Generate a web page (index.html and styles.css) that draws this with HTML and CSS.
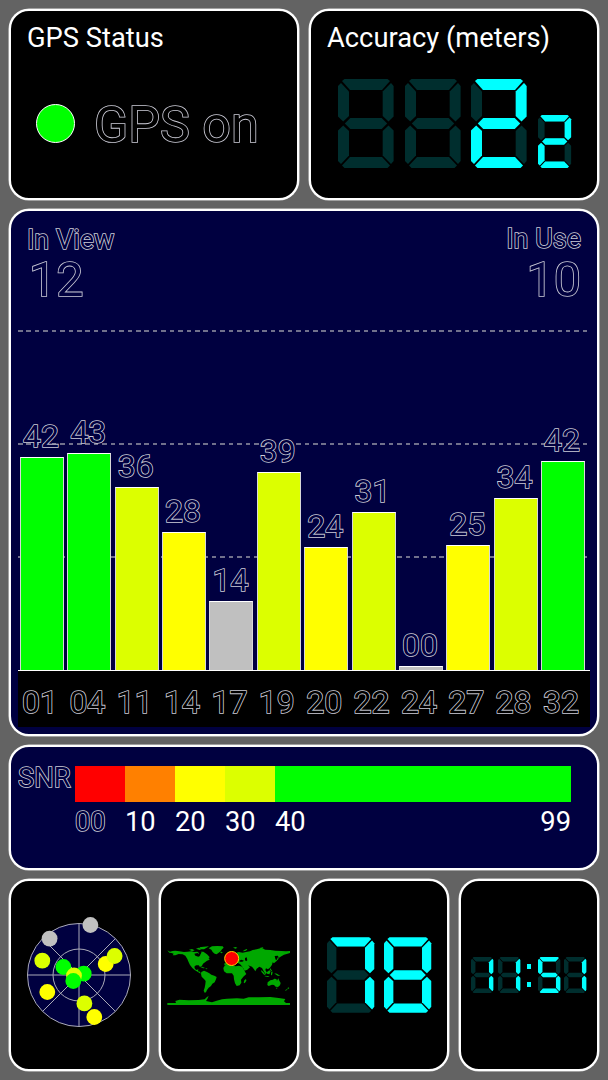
FILE: index.html
```html
<!DOCTYPE html>
<html lang="en">
<head>
<meta charset="utf-8">
<title>GPS Status</title>
<link rel="stylesheet" href="styles.css">
</head>
<body>
<svg class="defs" width="0" height="0" aria-hidden="true">
  <defs>
    <polygon id="sa" points="4,2 6.5,0 49.5,0 52,2 44,11 12,11"/>
    <polygon id="sb" points="53,4 55.6,7 55.6,37.5 50.5,42.5 44.7,37 44.7,12.5"/>
    <polygon id="sc" points="50.5,46.5 55.6,51.5 55.6,82 53,85 44.7,76.5 44.7,52"/>
    <polygon id="sd" points="12,78 44,78 52,86.5 49.5,89 6.5,89 4,86.5"/>
    <polygon id="se" points="5.2,46.5 11,52 11,76.5 3,85 0,82 0,51.5"/>
    <polygon id="sf" points="3,4 11,12.5 11,37 5.2,42.5 0,37.5 0,7"/>
    <polygon id="sg" points="6.8,44.5 12.3,39 43.7,39 49.2,44.5 43.7,50 12.3,50"/>
    <g id="all"><use href="#sa"/><use href="#sb"/><use href="#sc"/><use href="#sd"/><use href="#se"/><use href="#sf"/><use href="#sg"/></g>
  </defs>
</svg>
<main class="screen">
  <section class="panel status">
    <h2 class="title">GPS Status</h2>
    <div class="status-row"><span class="lamp"></span><span class="big outline">GPS on</span></div>
  </section>

  <section class="panel accuracy">
    <h2 class="title">Accuracy (meters)</h2>
    <div class="digits">
      <svg class="digit" viewBox="0 0 56 89"><use href="#all" class="off"/></svg>
      <svg class="digit" viewBox="0 0 56 89"><use href="#all" class="off"/></svg>
      <svg class="digit" viewBox="0 0 56 89"><use href="#all" class="off"/><g class="on"><use href="#sa"/><use href="#sb"/><use href="#sg"/><use href="#se"/><use href="#sd"/></g></svg>
      <svg class="digit small" viewBox="0 0 56 89"><use href="#all" class="off"/><g class="on"><use href="#sa"/><use href="#sb"/><use href="#sg"/><use href="#se"/><use href="#sd"/></g></svg>
    </div>
  </section>

  <section class="panel signal">
    <header class="counts">
      <div class="count"><div class="caption outline">In View</div><div class="big outline">12</div></div>
      <div class="count right"><div class="caption outline">In Use</div><div class="big outline">10</div></div>
    </header>
    <div class="chart">
      <div class="gridlines"><i></i><i></i><i></i></div>
      <div class="bars">
        <div class="col"><span class="num outline">42</span><div class="bar green" style="height:213px"></div></div>
        <div class="col"><span class="num outline">43</span><div class="bar green" style="height:217px"></div></div>
        <div class="col"><span class="num outline">36</span><div class="bar lime" style="height:183px"></div></div>
        <div class="col"><span class="num outline">28</span><div class="bar yellow" style="height:138px"></div></div>
        <div class="col"><span class="num outline">14</span><div class="bar grey" style="height:69px"></div></div>
        <div class="col"><span class="num outline">39</span><div class="bar lime" style="height:198px"></div></div>
        <div class="col"><span class="num outline">24</span><div class="bar yellow" style="height:123px"></div></div>
        <div class="col"><span class="num outline">31</span><div class="bar lime" style="height:158px"></div></div>
        <div class="col"><span class="num outline">00</span><div class="bar grey" style="height:4px"></div></div>
        <div class="col"><span class="num outline">25</span><div class="bar yellow" style="height:125px"></div></div>
        <div class="col"><span class="num outline">34</span><div class="bar lime" style="height:172px"></div></div>
        <div class="col"><span class="num outline">42</span><div class="bar green" style="height:209px"></div></div>
      </div>
    </div>
    <div class="ids">
      <span class="outline">01</span><span class="outline">04</span><span class="outline">11</span><span class="outline">14</span><span class="outline">17</span><span class="outline">19</span><span class="outline">20</span><span class="outline">22</span><span class="outline">24</span><span class="outline">27</span><span class="outline">28</span><span class="outline">32</span>
    </div>
  </section>

  <section class="panel snr">
    <div class="caption outline">SNR</div>
    <div class="scale">
      <div class="step red"></div><div class="step orange"></div><div class="step yellow"></div><div class="step lime"></div><div class="step green"></div>
      <span class="outline">00</span><span>10</span><span>20</span><span>30</span><span class="ends"><b>40</b><b>99</b></span>
    </div>
  </section>

  <section class="panel tile">
    <svg width="118" height="118" viewBox="-59 -59 118 118">
      <g class="sky"><circle r="51.5"/><circle r="26"/><path d="M-51.5 0H51.5M0-51.5V51.5M-36.4-36.4 36.4 36.4M-36.4 36.4 36.4-36.4"/></g>
      <g fill="#c0c0c0"><circle cx="11.4" cy="-50" r="7.9"/><circle cx="-29.4" cy="-36.4" r="7.9"/></g>
      <circle cx="-36.7" cy="-14.3" r="7.9" fill="#dcff00"/>
      <circle cx="-15.6" cy="-8" r="7.9" fill="#0f0"/>
      <circle cx="4.7" cy="-1.3" r="7.9" fill="#0f0"/>
      <circle cx="-5" cy=".5" r="7.9" fill="#dcff00"/>
      <circle cx="-5.7" cy="6" r="7.9" fill="#0f0"/>
      <circle cx="-31.7" cy="17" r="7.9" fill="#ff0"/>
      <circle cx="26.7" cy="-11" r="7.9" fill="#ff0"/>
      <circle cx="35.6" cy="-19" r="7.9" fill="#dcff00"/>
      <circle cx="5.4" cy="28.4" r="7.9" fill="#dcff00"/>
      <circle cx="15.3" cy="42" r="7.9" fill="#ff0"/>
    </svg>
  </section>

  <section class="panel tile">
    <svg width="127" height="70" viewBox="32 30 381 210">
      <g fill="#00a800">
        <path d="M36 61L44 65 52 63 60 62 72 64 86 66 97 65 108 64 116 66 126 65 131 69 128 74 134 76 138 68 145 68 148 76 156 78 160 85 163 89 155 92 149 97 143 101 140 107 134 110 130 106 122 106 117 110 119 117 124 120 129 118 128 124 134 125 136 131 129 127 119 121 111 114 104 105 100 97 96 87 90 77 82 73 70 72 60 76 52 76 55 71 48 69 42 68z"/>
        <path d="M101 59l9-2 8 4-7 3zM122 56l8-3 9 4-6 3zM136 65l8 0 11 8 7 7 0 5-10-3-7-8zM132 52l13-2 16-1-7 4-8 5-8 0z"/>
        <path d="M160 55L170 49 186 48 202 49 205 53 200 58 196 64 189 69 184 73 178 71 172 66 168 59z"/>
        <path d="M131 109l9 1 9 4-5 1-9-4zM150 114l7 2-4 2z"/>
        <path d="M138 126L146 122 155 126 162 130 168 134 177 137 184 141 182 148 178 157 171 161 167 168 160 173 155 180 152 187 148 188 145 182 148 173 150 163 151 153 146 147 139 140 137 132z"/>
        <path d="M194 66l6-1 2 3-4 2zM233 53l7-2 6 2-5 3zM262 64l5-4 7-3 2 2-6 4zM313 54l9-2 3 3-8 2z"/>
        <path d="M206 101L216 97 236 94 240 98 235 103 226 104 215 104 209 107zM236 72L243 68 250 66 262 68 272 66 284 64 292 60 304 58 318 54 330 59 345 60 360 62 378 63 392 64 404 63 404 69 394 72 386 74 378 79 370 84 368 77 358 78 360 86 363 93 356 100 352 97 350 104 345 112 338 118 332 115 330 120 335 128 331 133 325 124 320 114 312 110 304 116 300 124 296 118 290 110 278 106 284 112 276 119 268 122 262 112 256 104 250 100 240 98z"/>
        <path d="M208 107L218 103 229 103 233 107 241 109 251 107 261 110 266 119 271 129 273 132 264 140 257 149 258 158 253 166 244 168 239 160 236 148 235 137 230 130 214 130 206 124 204 114z"/>
        <path d="M267 151l5-4 1 5-5 8-3-2z"/>
        <path d="M318 120l7 7 6 8-5-1-8-9zM335 126l7-5 4 3-4 9-7-2zM328 137l15 2-5 2-10-2zM347 127l5-1-2 9-3 1zM357 130l8 1 10 7-8-1-7-4zM345 115l4 6 3 4-5-2-4-6zM358 94l6-5 4-8 2 5-7 8z"/>
        <path d="M337 157L345 151 353 149 357 146 363 147 365 152 369 145 372 152 376 159 374 166 368 171 361 170 356 165 350 164 340 168 336 165zM362 173l5 0-3 4zM398 172l4 2-6 5zM393 177l2 3-6 3z"/>
        <path d="M36 219L62 219 60 213 72 209 100 211 130 210 148 208 155 201 160 198 156 207 152 213 170 217 184 212 200 208 215 206 245 205 265 206 280 202 310 202 345 201 370 204 390 207 386 214 392 219 404 219 404 225 36 225z"/>
      </g>
      <path d="M117 71l10-2 8 8-6 3-9-3zM252 92l6-3 8 3-5 3-8 0zM269 84l5-2 2 9-4 3-3-4z" fill="#000"/>
      <circle cx="229" cy="85.5" r="21" fill="#f00" stroke="#ffd400" stroke-width="3"/>
    </svg>
  </section>

  <section class="panel tile speed">
    <svg class="digit" viewBox="0 0 56 89"><use href="#all" class="off"/><g class="on"><use href="#sa"/><use href="#sb"/><use href="#sc"/></g></svg>
    <svg class="digit" viewBox="0 0 56 89"><use href="#all" class="on"/></svg>
  </section>

  <section class="panel tile clock">
    <svg class="digit" viewBox="0 0 56 89"><use href="#all" class="off"/><g class="on"><use href="#sb"/><use href="#sc"/></g></svg>
    <svg class="digit" viewBox="0 0 56 89"><use href="#all" class="off"/><g class="on"><use href="#sb"/><use href="#sc"/></g></svg>
    <div class="colon"><i></i><i></i></div>
    <svg class="digit" viewBox="0 0 56 89"><use href="#all" class="off"/><g class="on"><use href="#sa"/><use href="#sf"/><use href="#sg"/><use href="#sc"/><use href="#sd"/></g></svg>
    <svg class="digit" viewBox="0 0 56 89"><use href="#all" class="off"/><g class="on"><use href="#sb"/><use href="#sc"/></g></svg>
  </section>
</main>
</body>
</html>
```
FILE: styles.css
```css
* { box-sizing: border-box; }
body {
  margin: 0;
  background: #636363;
  color: #fff;
  font-family: Roboto, "Liberation Sans", sans-serif;
}
.defs { display: block; }
.screen {
  display: grid;
  width: 608px;
  height: 1080px;
  padding: 9px;
  grid-template-columns: repeat(4, 140px);
  grid-template-rows: 191px 527px 125px 192px;
  gap: 9px 10px;
}
.panel {
  --ground: #000;
  background: var(--ground);
  border: 2px solid #fff;
  border-radius: 20px;
  box-shadow: 0 0 0 .5px rgba(255, 255, 255, .8);
}
.status, .accuracy { grid-column: span 2; }
.signal, .snr { grid-column: span 4; --ground: #000040; }

.title {
  margin: 0;
  padding: 10px 0 0 16px;
  font-size: 27.3px;
  font-weight: 400;
  line-height: 34px;
}
/* the fill covers the inner half of the stroke, leaving a thin contour */
.outline {
  color: var(--ground);
  -webkit-text-stroke: 1.6px #cfcfda;
  paint-order: stroke fill;
  opacity: .99;
}
.big { font-size: 48.5px; line-height: 46px; }
.caption { font-size: 27px; line-height: 30px; }

.status-row {
  display: flex;
  align-items: center;
  gap: 19px;
  padding: 41px 0 0 25px;
}
.lamp {
  width: 39px;
  height: 39px;
  border: 1.5px solid #fff;
  border-radius: 50%;
  background: #0f0;
}
.status-row .big { font-size: 50.3px; line-height: 54px; padding-top: 2px; margin-bottom: -1px; }

.digit { display: block; overflow: visible; }
.off { fill: #002e2e; }
.on { fill: #0ff; }
.digits {
  display: flex;
  align-items: flex-end;
  gap: 10.7px;
  padding: 24px 0 0 27px;
}
.digits .digit { width: 56px; height: 89px; }
.digits .small { width: 33.4px; height: 53px; }

.signal { padding: 0 7px; }
.counts {
  display: flex;
  justify-content: space-between;
  height: 98px;
  padding: 14px 9px 0;
}
.count .big { padding: 2px 0 0 2px; }
.count.right { text-align: right; margin-top: -1px; }
.right .big { padding-top: 3px; }
.chart {
  position: relative;
  height: 362px;
  border-bottom: 1px solid #fff;
}
.gridlines {
  position: absolute;
  inset: 21px 2px 0 0;
  display: flex;
  flex-direction: column;
  gap: 111px;
}
.gridlines i {
  height: 2px;
  background: repeating-linear-gradient(90deg, #70708c 0 4.5px, transparent 4.5px 8.43px);
}
.bars {
  position: relative;
  display: grid;
  grid-template-columns: repeat(12, 44px);
  justify-content: space-between;
  align-items: end;
  height: 100%;
  padding: 0 5px 0 2px;
}
.num {
  display: block;
  margin-left: -2px;
  padding-bottom: 1px;
  font-size: 32px;
  line-height: 40px;
  text-align: center;
}
.bar {
  border: 1px solid #d8d8d8;
  border-top-color: #fff;
  border-bottom: 0;
}
.green { background: #0f0; }
.lime { background: #dcff00; }
.yellow { background: #ff0; }
.orange { background: #ff8000; }
.red { background: #f00; }
.grey { background: #c0c0c0; }
.ids {
  --ground: #000;
  display: grid;
  grid-template-columns: repeat(12, 44px);
  justify-content: space-between;
  height: 56px;
  padding: 0 7px 0 0;
  background: #000;
  font-size: 32px;
  line-height: 62px;
  text-align: center;
}
.ids .outline { color: #000; }

.snr {
  display: grid;
  grid-template-columns: 57px 496px;
  padding: 19px 0 0 7px;
}
.snr .caption { font-size: 27.3px; line-height: 25px; }
.scale {
  display: grid;
  grid-template-columns: repeat(4, 50px) 1fr;
  grid-template-rows: 36px 40px;
  font-size: 27.3px;
  line-height: 40px;
}
.ends { display: flex; justify-content: space-between; }
.ends b { font-weight: 400; }

.tile { display: flex; align-items: center; justify-content: center; }
.sky circle { fill: #000040; }
.sky circle, .sky path { stroke: #aaaab8; stroke-width: 1; }
.sky circle + circle { fill: none; }
.speed { gap: 9px; }
.speed .digit { width: 47.6px; height: 76px; }
.clock { gap: 4.3px; }
.clock .digit { width: 22.5px; height: 36px; }
.colon {
  display: flex;
  flex-direction: column;
  gap: 13px;
  margin: 0 2px 0 2px;
}
.colon i { width: 4.6px; height: 5px; background: #0ff; }
```
